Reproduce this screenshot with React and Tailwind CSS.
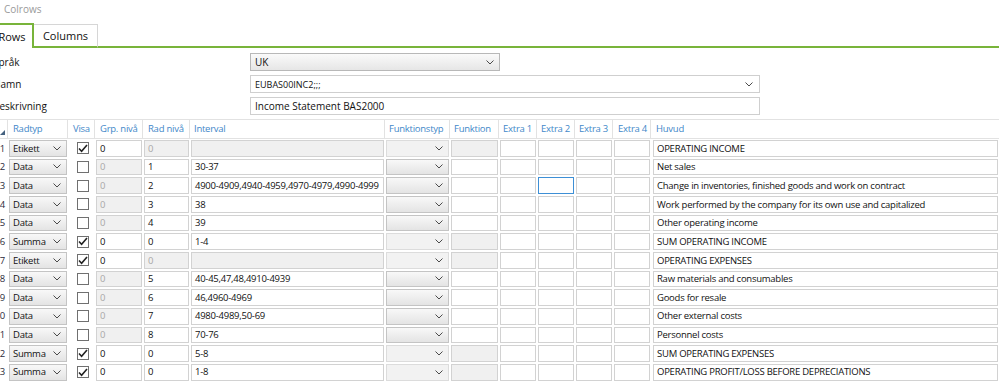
import React from "react";

const rows = [
  { n: 1, typ: "Etikett", visa: true, grp: "0", rad: "0", interval: "", huvud: "OPERATING INCOME" },
  { n: 2, typ: "Data", visa: false, grp: "0", rad: "1", interval: "30-37", huvud: "Net sales" },
  { n: 3, typ: "Data", visa: false, grp: "0", rad: "2", interval: "4900-4909,4940-4959,4970-4979,4990-4999", huvud: "Change in inventories, finished goods and work on contract" },
  { n: 4, typ: "Data", visa: false, grp: "0", rad: "3", interval: "38", huvud: "Work performed by the company for its own use and capitalized" },
  { n: 5, typ: "Data", visa: false, grp: "0", rad: "4", interval: "39", huvud: "Other operating income" },
  { n: 6, typ: "Summa", visa: true, grp: "0", rad: "0", interval: "1-4", huvud: "SUM OPERATING INCOME" },
  { n: 7, typ: "Etikett", visa: true, grp: "0", rad: "0", interval: "", huvud: "OPERATING EXPENSES" },
  { n: 8, typ: "Data", visa: false, grp: "0", rad: "5", interval: "40-45,47,48,4910-4939", huvud: "Raw materials and consumables" },
  { n: 9, typ: "Data", visa: false, grp: "0", rad: "6", interval: "46,4960-4969", huvud: "Goods for resale" },
  { n: 10, typ: "Data", visa: false, grp: "0", rad: "7", interval: "4980-4989,50-69", huvud: "Other external costs" },
  { n: 11, typ: "Data", visa: false, grp: "0", rad: "8", interval: "70-76", huvud: "Personnel costs" },
  { n: 12, typ: "Summa", visa: true, grp: "0", rad: "0", interval: "5-8", huvud: "SUM OPERATING EXPENSES" },
  { n: 13, typ: "Summa", visa: true, grp: "0", rad: "0", interval: "1-8", huvud: "OPERATING PROFIT/LOSS BEFORE DEPRECIATIONS" },
];

const Chevron = ({ className = "" }) => (
  <svg width="8" height="5" viewBox="0 0 8 5" className={className}>
    <polyline points="0.5,0.5 4,4 7.5,0.5" fill="none" stroke="#4a4a4a" strokeWidth="1" />
  </svg>
);

const Check = ({ checked }) => (
  <div className="w-[12px] h-[12px] border border-[#707070] bg-white flex items-center justify-center">
    {checked && (
      <svg width="10" height="9" viewBox="0 0 10 9">
        <polyline points="1,4.5 3.6,7.3 9,1" fill="none" stroke="#222" strokeWidth="1.6" />
      </svg>
    )}
  </div>
);

// plain text cell, white or greyed out
const Cell = ({ value, disabled, focus }) => (
  <div
    className={`h-full mx-[1px] flex items-center pl-[3px] border whitespace-nowrap overflow-hidden ${
      focus ? "border-[#3d8fd6]" : "border-[#d2d2d2]"
    } ${disabled ? "bg-[#f0f0f0] text-[#a8a8a8]" : "bg-white text-[#111]"}`}
  >
    {value}
  </div>
);

const Drop = ({ value, disabled }) => (
  <div
    className={`h-full mx-[1px] flex items-center justify-between pl-[3px] pr-[5px] border ${
      disabled
        ? "bg-[#f2f2f2] border-[#dcdcdc]"
        : "bg-gradient-to-b from-[#f8f8f8] to-[#e4e4e4] border-[#c4c4c4]"
    }`}
  >
    <span>{value}</span>
    <Chevron />
  </div>
);

const headers = [
  ["Radtyp", "w-[60px]", "pl-[5px]"],
  ["Visa", "w-[27px]", "pl-[5px]"],
  ["Grp. nivå", "w-[48px]", "pl-[5px]"],
  ["Rad nivå", "w-[47px]", "pl-[5px]"],
  ["Interval", "w-[195px]", "pl-[4px]"],
  ["Funktionstyp", "w-[65px]", "pl-[4px]"],
  ["Funktion", "w-[49px]", "pl-[4px]"],
  ["Extra 1", "w-[38px]", "pl-[4px]"],
  ["Extra 2", "w-[38px]", "pl-[4px]"],
  ["Extra 3", "w-[38px]", "pl-[4px]"],
  ["Extra 4", "w-[38px]", "pl-[5px]"],
];

export default function App() {
  return (
    <div className="w-[999px] h-[381px] overflow-hidden bg-white text-[#111] text-[9.5px] tracking-[-0.25px] font-['Open_Sans',sans-serif] leading-none">
      {/* Window title */}
      <div className="h-[23px] pl-[4px] pt-[4px] text-[10px] tracking-normal text-[#9a9a9a]">Colrows</div>

      {/* Tabs */}
      <div className="flex items-end h-[25px] text-[11px] tracking-normal">
        <div className="ml-[-10px] w-[44px] h-[25px] border-t-2 border-x-2 border-[#78b43a] bg-white flex items-center justify-center">
          Rows
        </div>
        <div className="w-[64px] h-[24px] border-t border-r border-[#d6d6d6] border-b-2 border-b-[#78b43a] flex items-center justify-center">
          Columns
        </div>
        <div className="flex-1 border-b-2 border-[#78b43a]" />
      </div>

      {/* Header form */}
      <div className="pt-[5px] flex flex-col gap-[4px] text-[10px] tracking-normal">
        <div className="flex items-center h-[18px]">
          <div className="ml-[-7px] w-[257px]">Språk</div>
          <div className="w-[250px] h-full border border-[#b8b8b8] bg-gradient-to-b from-[#fafafa] to-[#e6e6e6] flex items-center justify-between pl-[4px] pr-[5px]">
            <span>UK</span>
            <Chevron />
          </div>
        </div>
        <div className="flex items-center h-[18px]">
          <div className="ml-[-7px] w-[257px]">Namn</div>
          <div className="w-[510px] h-full border border-[#cfcfcf] bg-white flex items-center justify-between pl-[4px] pr-[6px] text-[9px]">
            <span>EUBAS00INC2;;;</span>
            <Chevron />
          </div>
        </div>
        <div className="flex items-center h-[18px]">
          <div className="ml-[-7px] w-[257px]">Beskrivning</div>
          <div className="w-[510px] h-full border border-[#cfcfcf] bg-white flex items-center pl-[4px]">
            Income Statement BAS2000
          </div>
        </div>
      </div>

      {/* Grid */}
      <div className="mt-[4px] ml-[-10px]">
        <div className="flex h-[20px] border-t border-b border-[#e2e2e2] text-[#3f88c9]">
          <div className="w-[18px] flex items-end justify-end pr-[2px] pb-[3px] border-r border-[#e2e2e2]">
            <svg width="5" height="5" viewBox="0 0 5 5">
              <polygon points="5,0 5,5 0,5" fill="#44617f" />
            </svg>
          </div>
          {headers.map(([label, w, pl]) => (
            <div key={label} className={`${w} ${pl} flex items-center border-r border-[#e2e2e2] whitespace-nowrap`}>
              {label}
            </div>
          ))}
          <div className="flex-1 pl-[5px] flex items-center">Huvud</div>
        </div>

        {rows.map((r) => {
          const etikett = r.typ === "Etikett";
          const data = r.typ === "Data";
          return (
            <div key={r.n} className="flex h-[18.667px] py-[1px]">
              <div className="w-[18px] flex items-center justify-end pr-[3px] text-[#2b2b3a]">{r.n}</div>
              <div className="w-[60px]">
                <Drop value={r.typ} />
              </div>
              <div className="w-[27px] flex items-center pl-[9px]">
                <Check checked={r.visa} />
              </div>
              <div className="w-[48px]">
                <Cell value={r.grp} disabled={data} />
              </div>
              <div className="w-[47px]">
                <Cell value={r.rad} disabled={etikett} />
              </div>
              <div className="w-[195px]">
                <Cell value={r.interval} disabled={etikett} />
              </div>
              <div className="w-[65px]">
                <Drop value="" disabled={!data} />
              </div>
              <div className="w-[49px]">
                <Cell value="" disabled={!data} />
              </div>
              <div className="w-[38px]">
                <Cell value="" />
              </div>
              <div className="w-[38px]">
                <Cell value="" focus={r.n === 3} />
              </div>
              <div className="w-[38px]">
                <Cell value="" />
              </div>
              <div className="w-[38px]">
                <Cell value="" />
              </div>
              <div className="flex-1 pl-[1px]">
                <Cell value={r.huvud} />
              </div>
            </div>
          );
        })}
      </div>
    </div>
  );
}
